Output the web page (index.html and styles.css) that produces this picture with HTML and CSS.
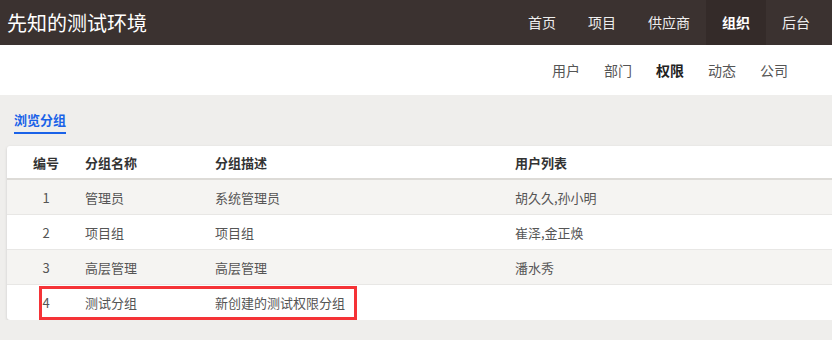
FILE: index.html
```html
<!DOCTYPE html>
<html lang="zh-CN">
<head>
    <meta charset="UTF-8">
    <meta name="viewport" content="width=device-width, initial-scale=1.0">
    <title>先知的测试环境</title>
    <link rel="stylesheet" href="styles.css">
</head>
<body>
    <!-- Top bar -->
    <div class="topbar">
        <div class="site-title">先知的测试环境</div>
        <ul class="main-nav">
            <li>首页</li>
            <li>项目</li>
            <li>供应商</li>
            <li class="active">组织</li>
            <li>后台</li>
        </ul>
    </div>

    <!-- Sub navigation -->
    <div class="subbar">
        <ul class="sub-nav">
            <li>用户</li>
            <li>部门</li>
            <li class="active">权限</li>
            <li>动态</li>
            <li>公司</li>
        </ul>
    </div>

    <!-- Content -->
    <div class="content">
        <div class="tabs">
            <span class="tab active">浏览分组</span>
        </div>

        <div class="card">
            <table class="group-table">
                <colgroup>
                    <col class="col-id">
                    <col class="col-name">
                    <col class="col-desc">
                    <col>
                </colgroup>
                <tr>
                    <th class="center">编号</th>
                    <th>分组名称</th>
                    <th>分组描述</th>
                    <th>用户列表</th>
                </tr>
                <tr>
                    <td class="center">1</td>
                    <td>管理员</td>
                    <td>系统管理员</td>
                    <td>胡久久,孙小明</td>
                </tr>
                <tr>
                    <td class="center">2</td>
                    <td>项目组</td>
                    <td>项目组</td>
                    <td>崔泽,金正焕</td>
                </tr>
                <tr>
                    <td class="center">3</td>
                    <td>高层管理</td>
                    <td>高层管理</td>
                    <td>潘水秀</td>
                </tr>
                <tr class="last-row">
                    <td class="center">4</td>
                    <td>测试分组</td>
                    <td>新创建的测试权限分组</td>
                    <td></td>
                </tr>
            </table>
            <!-- annotation box -->
            <div class="highlight"></div>
        </div>
    </div>
</body>
</html>
```

FILE: styles.css
```css
/* Global styles */
body {
    font-family: "Noto Sans CJK SC", "Liberation Sans", sans-serif;
    background-color: #efeeec;
    margin: 0;
    padding: 0;
    overflow: hidden;
}

ul {
    list-style: none;
    margin: 0;
    padding: 0;
}

/* Top bar */
.topbar {
    background-color: #3b3230;
    height: 45px;
    display: flex;
    justify-content: space-between;
    align-items: stretch;
}

.site-title {
    color: #fff;
    font-size: 20px;
    line-height: 45px;
    padding-left: 7px;
}

.main-nav {
    display: flex;
    margin-right: 6px;
}

.main-nav li {
    color: #eee;
    font-size: 14px;
    line-height: 45px;
    padding: 0 16px;
}

.main-nav li.active {
    background-color: #342b29;
    color: #fff;
    font-weight: bold;
}

/* Sub bar */
.subbar {
    background-color: #fff;
    height: 50px;
    display: flex;
    justify-content: flex-end;
}

.sub-nav {
    display: flex;
    margin-right: 32px;
}

.sub-nav li {
    color: #555;
    font-size: 14px;
    line-height: 50px;
    padding: 0 12px;
}

.sub-nav li.active {
    color: #222;
    font-weight: bold;
}

/* Content */
.content {
    padding: 12px 0 0 7px;
}

.tabs {
    padding-left: 7px;
    display: flex;
}

.tab {
    font-size: 13px;
    line-height: 25px;
    color: #1a62e8;
    font-weight: bold;
    border-bottom: 2px solid #1a62e8;
}

.card {
    position: relative;
    background-color: #fff;
    margin-top: 12px;
    margin-right: -20px;
    border-radius: 3px;
    box-shadow: 0 1px 3px rgba(0, 0, 0, 0.15);
}

.group-table {
    width: 100%;
    border-collapse: collapse;
    table-layout: fixed;
    font-size: 13px;
    color: #555;
}

.col-id {
    width: 78px;
}

.col-name {
    width: 130px;
}

.col-desc {
    width: 300px;
}

.group-table th {
    text-align: left;
    color: #333;
    height: 32px;
    padding: 0;
    border-bottom: 2px solid #dddbd7;
}

.group-table td {
    height: 34px;
    padding: 0;
    border-bottom: 1px solid #e8e7e5;
}

.group-table .last-row td {
    height: 35px;
    border-bottom: none;
}

.group-table tr:nth-child(even) td {
    background-color: #f5f4f2;
}

.group-table .center {
    text-align: center;
}

/* Red annotation box */
.highlight {
    position: absolute;
    left: 32px;
    top: 140px;
    width: 318px;
    height: 34px;
    border: 3px solid #f53337;
    box-sizing: border-box;
}
```
